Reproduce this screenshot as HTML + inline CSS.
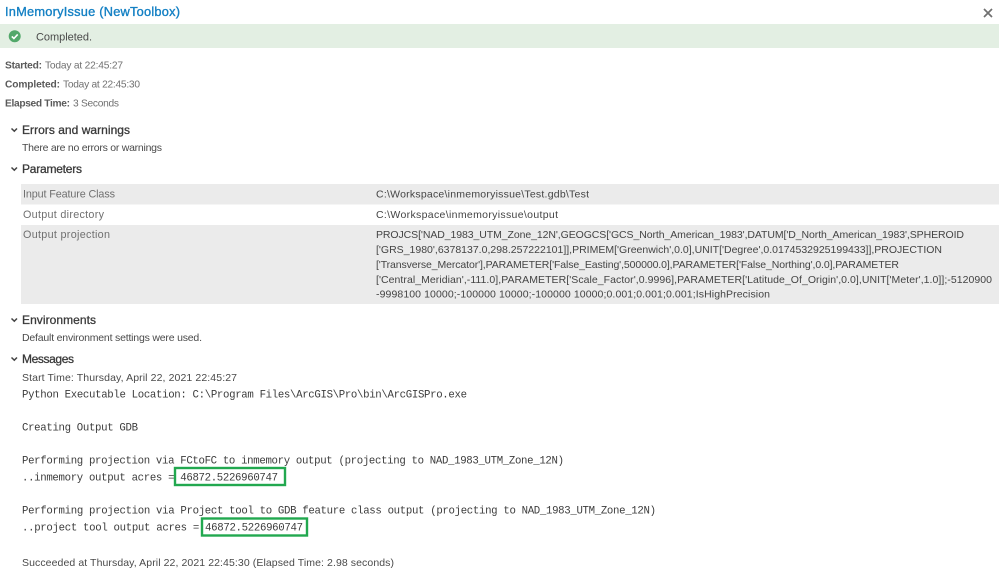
<!DOCTYPE html>
<html><head><meta charset="utf-8"><title>InMemoryIssue</title>
<style>
html,body{margin:0;padding:0;background:#fff;width:999px;height:586px;overflow:hidden}
svg{display:block;filter:blur(.25px)}
text{font-family:"Liberation Sans",sans-serif;font-size:10.5px;fill:#4a4a4a;white-space:pre}
.m{font-family:"Liberation Mono",monospace;font-size:10.7px;fill:#3c3c3c}
.h{font-size:12px;fill:#3a3a3a;stroke:#3a3a3a;stroke-width:.3px}
.b{font-weight:bold;font-size:10.2px;fill:#5a5a5a}
.l{fill:#707070;font-size:10.8px}
.t{fill:#707070;font-size:10.2px}
.v{fill:#444}
</style></head><body>
<svg width="999" height="586" viewBox="0 0 999 586" xmlns="http://www.w3.org/2000/svg">
<rect width="999" height="586" fill="#fff"/>
<text x="5" y="16" textLength="175" style="font-size:12.8px;fill:#1480c4;stroke:#1480c4;stroke-width:.35px">InMemoryIssue (NewToolbox)</text>
<path d="M984 9L992 17M992 9L984 17" stroke="#707070" stroke-width="1.7" fill="none"/>
<rect x="0" y="24" width="999" height="24" fill="#e3efe3"/>
<circle cx="14.7" cy="36.3" r="6" fill="#52a86a"/>
<path d="M11.8 36.4L13.9 38.5L17.7 34.4" stroke="#fff" stroke-width="1.6" fill="none"/>
<text x="36" y="40.5" textLength="56" style="font-size:11px">Completed.</text>

<text x="5" y="68.5" textLength="37" class="b">Started:</text><text x="45" y="68.5" textLength="78" class="t">Today at 22:45:27</text>
<text x="5" y="87.5" textLength="55" class="b">Completed:</text><text x="63" y="87.5" textLength="77" class="t">Today at 22:45:30</text>
<text x="5" y="106.5" textLength="65" class="b">Elapsed Time:</text><text x="73" y="106.5" textLength="46" class="t">3 Seconds</text>

<path d="M11.5 128.5L14.3 131.2L17 128.5" stroke="#444" stroke-width="1.5" fill="none"/>
<text x="22" y="134" textLength="108" class="h">Errors and warnings</text>
<text x="22" y="151" textLength="140">There are no errors or warnings</text>

<path d="M11.5 167.5L14.3 170.2L17 167.5" stroke="#444" stroke-width="1.5" fill="none"/>
<text x="22" y="173" textLength="60" class="h">Parameters</text>

<rect x="21" y="184" width="978" height="20.5" fill="#ebebeb"/>
<rect x="21" y="225" width="978" height="79" fill="#ebebeb"/>
<text x="23" y="197.5" textLength="92" class="l">Input Feature Class</text>
<text x="23" y="218" textLength="81" class="l">Output directory</text>
<text x="23" y="238" textLength="87" class="l">Output projection</text>
<text x="376" y="197.5" textLength="213" class="v">C:\Workspace\inmemoryissue\Test.gdb\Test</text>
<text x="376" y="218" textLength="182" class="v">C:\Workspace\inmemoryissue\output</text>
<text x="376" y="238" textLength="588" class="v">PROJCS['NAD_1983_UTM_Zone_12N',GEOGCS['GCS_North_American_1983',DATUM['D_North_American_1983',SPHEROID</text>
<text x="376" y="253" textLength="566" class="v">['GRS_1980',6378137.0,298.257222101]],PRIMEM['Greenwich',0.0],UNIT['Degree',0.0174532925199433]],PROJECTION</text>
<text x="376" y="268" textLength="523" class="v">['Transverse_Mercator'],PARAMETER['False_Easting',500000.0],PARAMETER['False_Northing',0.0],PARAMETER</text>
<text x="376" y="283" textLength="616" class="v">['Central_Meridian',-111.0],PARAMETER['Scale_Factor',0.9996],PARAMETER['Latitude_Of_Origin',0.0],UNIT['Meter',1.0]];-5120900</text>
<text x="376" y="297.5" textLength="394" class="v">-9998100 10000;-100000 10000;-100000 10000;0.001;0.001;0.001;IsHighPrecision</text>

<path d="M11.5 318.5L14.3 321.2L17 318.5" stroke="#444" stroke-width="1.5" fill="none"/>
<text x="22" y="324" textLength="74" class="h">Environments</text>
<text x="22" y="341" textLength="180">Default environment settings were used.</text>

<path d="M11.5 357.5L14.3 360.2L17 357.5" stroke="#444" stroke-width="1.5" fill="none"/>
<text x="22" y="363" textLength="52" class="h">Messages</text>
<text x="22" y="381" textLength="215">Start Time: Thursday, April 22, 2021 22:45:27</text>
<text x="22" y="397.5" class="m" textLength="445">Python Executable Location: C:\Program Files\ArcGIS\Pro\bin\ArcGISPro.exe</text>
<text x="22" y="430.5" class="m" textLength="116">Creating Output GDB</text>
<text x="22" y="463.5" class="m" textLength="542">Performing projection via FCtoFC to inmemory output (projecting to NAD_1983_UTM_Zone_12N)</text>
<text x="22" y="480.5" class="m" textLength="256">..inmemory output acres = 46872.5226960747</text>
<text x="22" y="513.5" class="m" textLength="634">Performing projection via Project tool to GDB feature class output (projecting to NAD_1983_UTM_Zone_12N)</text>
<text x="22" y="530.5" class="m" textLength="281">..project tool output acres = 46872.5226960747</text>
<text x="22" y="566" textLength="372">Succeeded at Thursday, April 22, 2021 22:45:30 (Elapsed Time: 2.98 seconds)</text>

<rect x="175" y="468" width="110" height="17" fill="none" stroke="#22a84f" stroke-width="2.4"/>
<rect x="202" y="518.5" width="105" height="17" fill="none" stroke="#22a84f" stroke-width="2.4"/>
</svg>
</body></html>
